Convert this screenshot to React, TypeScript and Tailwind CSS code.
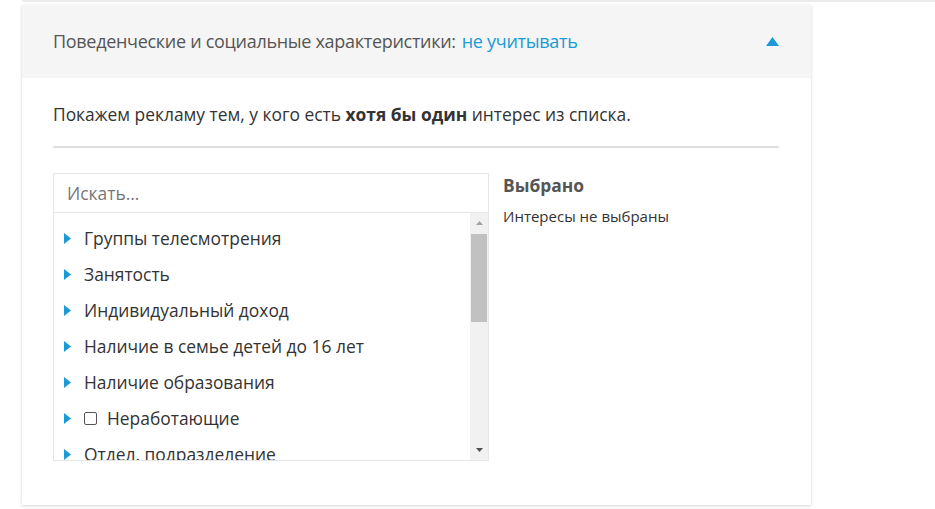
const items = [
  { label: "Группы телесмотрения" },
  { label: "Занятость" },
  { label: "Индивидуальный доход" },
  { label: "Наличие в семье детей до 16 лет" },
  { label: "Наличие образования" },
  { label: "Неработающие", checkbox: true },
  { label: "Отдел. подразделение" },
];

function Caret() {
  return (
    <svg width="7" height="11" viewBox="0 0 7 11" className="shrink-0">
      <path d="M0 0 L7 5.5 L0 11 Z" fill="#1a9ad6" />
    </svg>
  );
}

export default function App() {
  return (
    <div className="min-h-[509px] w-[935px] bg-white font-['Open_Sans',sans-serif] text-[#333]">
      <div className="ml-[22px] h-[2px] bg-[#ececec]" />
      <div className="ml-[22px] mt-[3px] w-[789px] bg-white shadow-[0_1px_3px_rgba(0,0,0,0.18)]">
        <div className="flex h-[73px] items-center justify-between bg-[#f5f5f5] pl-[31px] pr-[32px]">
          <div className="text-[18px] tracking-[-0.3px]">
            <span className="text-[#555]">Поведенческие и социальные характеристики:</span>
            <span className="ml-[6px] text-[#1a9ad6]">не учитывать</span>
          </div>
          <svg width="13" height="9" viewBox="0 0 13 9">
            <path d="M0 9 L6.5 0 L13 9 Z" fill="#1a9ad6" />
          </svg>
        </div>

        <div className="px-[31px] pb-[44px] pt-[24px]">
          <p className="text-[17.4px] leading-[24px]">
            Покажем рекламу тем, у кого есть <b className="font-bold">хотя бы один</b> интерес из списка.
          </p>
          <div className="mr-[1px] mt-[20px] h-[2px] bg-[#dedede]" />

          <div className="mt-[25px] flex gap-[14px]">
            <div className="w-[436px] shrink-0">
              <div className="flex h-[40px] items-center border border-[#e6e6e6] px-[13px] text-[17.4px] text-[#777]">
                Искать...
              </div>
              <div className="flex h-[248px] border border-t-0 border-[#e6e6e6]">
                <div className="flex-1 overflow-hidden pl-[10px] pt-[7px]">
                  {items.map((it) => (
                    <div key={it.label} className="flex h-[36px] items-center gap-[13px] text-[17.4px] leading-[24px]">
                      <Caret />
                      <div className="flex items-center gap-[10px]">
                        {it.checkbox && (
                          <span className="h-[13px] w-[13px] rounded-[2px] border border-[#555] bg-white" />
                        )}
                        <span className="whitespace-nowrap">{it.label}</span>
                      </div>
                    </div>
                  ))}
                </div>
                <div className="flex w-[18px] flex-col items-center bg-[#f1f1f1] py-[1px]">
                  <div className="flex h-[18px] items-center justify-center">
                    <svg width="7" height="4" viewBox="0 0 7 4">
                      <path d="M0 4 L3.5 0 L7 4 Z" fill="#a3a3a3" />
                    </svg>
                  </div>
                  <div className="mt-[2px] h-[88px] w-[16px] bg-[#c1c1c1]" />
                  <div className="flex-1" />
                  <div className="flex h-[18px] items-center justify-center">
                    <svg width="7" height="4" viewBox="0 0 7 4">
                      <path d="M0 0 L3.5 4 L7 0 Z" fill="#505050" />
                    </svg>
                  </div>
                </div>
              </div>
            </div>

            <div className="pt-[1px]">
              <div className="text-[17.4px] font-bold leading-[22px] text-[#555]">Выбрано</div>
              <div className="mt-[10px] text-[15px] leading-[20px] text-[#333]">Интересы не выбраны</div>
            </div>
          </div>
        </div>
      </div>
    </div>
  );
}
